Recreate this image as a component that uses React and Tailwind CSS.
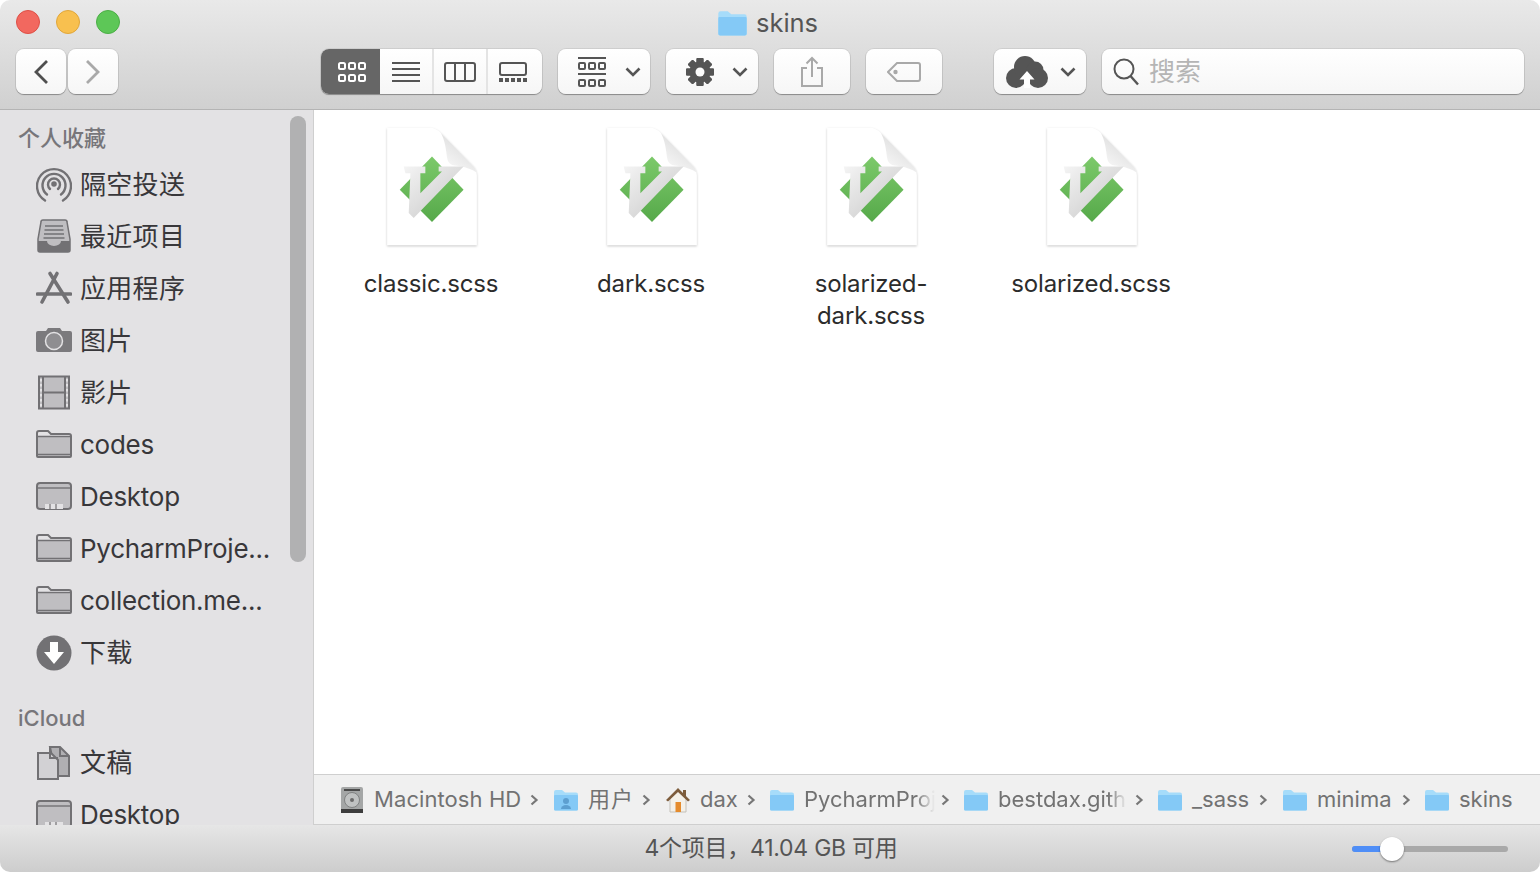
import React from "react";

const font = "font-['Inter','Noto_Sans_CJK_SC',sans-serif]";
const btn =
  "flex items-center bg-linear-to-b from-white to-[#f6f6f6] rounded-[8px] h-[45px] shadow-[0_1px_1px_rgba(0,0,0,0.3),0_0_0_1px_rgba(0,0,0,0.07)]";

const Chevron = ({ className = "" }) => (
  <svg width="16" height="10" viewBox="0 0 16 10" className={className}>
    <path d="M1.5 1.5 8 8l6.5-6.5" fill="none" stroke="#555" strokeWidth="2.6" />
  </svg>
);

const GridIcon = ({ color = "#555" }) => (
  <svg width="28" height="20" viewBox="0 0 28 20" fill="none" stroke={color} strokeWidth="2">
    {[1, 11, 21].map((x) =>
      [1, 13].map((y) => <rect key={`${x}-${y}`} x={x} y={y} width="6" height="6" rx="1.5" />)
    )}
  </svg>
);

const ListIcon = () => (
  <svg width="28" height="20" viewBox="0 0 28 20" stroke="#555" strokeWidth="2">
    {[1, 7, 13, 19].map((y) => <line key={y} x1="0" x2="28" y1={y} y2={y} />)}
  </svg>
);

const ColumnsIcon = () => (
  <svg width="32" height="20" viewBox="0 0 32 20" fill="none" stroke="#555" strokeWidth="2">
    <rect x="1" y="1" width="30" height="18" rx="2" />
    <path d="M11 1v18M21 1v18" />
  </svg>
);

const GalleryIcon = () => (
  <svg width="28" height="20" viewBox="0 0 28 20" fill="none">
    <rect x="1" y="1" width="26" height="12" rx="2" stroke="#555" strokeWidth="2" />
    {[0, 6, 12, 18, 24].map((x) => <rect key={x} x={x} y="16" width="4" height="4" fill="#555" />)}
  </svg>
);

const GroupIcon = () => (
  <svg width="28" height="30" viewBox="0 0 28 30" fill="none" stroke="#555" strokeWidth="2">
    <path d="M0 1h28M0 17h28" />
    {[1, 11, 21].map((x) =>
      [6, 23].map((y) => <rect key={`${x}-${y}`} x={x} y={y} width="6" height="6" rx="1" />)
    )}
  </svg>
);

const GearIcon = () => (
  <svg width="28" height="28" viewBox="0 0 28 28">
    <g fill="#555">
      {[0, 45, 90, 135, 180, 225, 270, 315].map((a) => (
        <rect key={a} x="10.5" y="0" width="7" height="28" rx="1" transform={`rotate(${a} 14 14)`} />
      ))}
      <circle cx="14" cy="14" r="10.5" />
    </g>
    <circle cx="14" cy="14" r="4.5" fill="#fbfbfb" />
  </svg>
);

const ShareIcon = () => (
  <svg width="24" height="32" viewBox="0 0 24 32" fill="none" stroke="#a9a9a9" strokeWidth="2">
    <path d="M7 12H2v18h20V12h-5M12 21V2M6.5 7.5 12 2l5.5 5.5" />
  </svg>
);

const TagIcon = () => (
  <svg width="34" height="20" viewBox="0 0 34 20" fill="none" stroke="#a9a9a9" strokeWidth="2">
    <path d="M10 1h21a2 2 0 0 1 2 2v14a2 2 0 0 1-2 2H10l-9-9z" />
    <circle cx="8.5" cy="10" r="1.2" fill="#a9a9a9" />
  </svg>
);

const CloudIcon = () => (
  <svg width="42" height="32" viewBox="0 0 42 32">
    <g fill="#555">
      <circle cx="10" cy="22" r="10" />
      <circle cx="19" cy="11" r="11" />
      <circle cx="29" cy="14" r="8.5" />
      <circle cx="32" cy="22" r="10" />
      <rect x="10" y="16" width="22" height="10" />
    </g>
    <path d="M21 15 13.5 23.5h4.5V32h6v-8.5h4.5z" fill="#fff" />
  </svg>
);

const SearchIcon = () => (
  <svg width="26" height="28" viewBox="0 0 26 28" fill="none" stroke="#555" strokeWidth="2">
    <circle cx="11" cy="11" r="9.5" />
    <path d="m17.5 18 7.5 8.5" strokeWidth="2.4" />
  </svg>
);

const BlueFolder = ({ w = 26, h = 22, children }) => (
  <svg width={w} height={h} viewBox="0 0 26 22" className="shrink-0">
    <path d="M1 3a2 2 0 0 1 2-2h6l3 2.5h11a2 2 0 0 1 2 2V20a1.5 1.5 0 0 1-1.5 1.5h-21A1.5 1.5 0 0 1 1 20z" fill="#a6dcfa" />
    <path d="M1 7a1 1 0 0 1 1-1h22a1 1 0 0 1 1 1v13a1.5 1.5 0 0 1-1.5 1.5h-21A1.5 1.5 0 0 1 1 20z" fill="#84c9f6" />
    {children}
  </svg>
);

const iconStroke = "#727174";
const iconFill = "#bfbec1";

const AirdropIcon = () => (
  <svg width="36" height="36" viewBox="0 0 36 36" fill="none" stroke={iconStroke} strokeWidth="2.4" strokeLinecap="round">
    <path d="M9 33.5a17 17 0 1 1 18 0" />
    <path d="M11 27.5a11.5 11.5 0 1 1 14 0" />
    <path d="M14 22a6 6 0 1 1 8 0" />
    <circle cx="18" cy="17" r="1.6" fill={iconStroke} />
  </svg>
);

const RecentsIcon = () => (
  <svg width="36" height="36" viewBox="0 0 36 36">
    <path d="M7 1h22a2 2 0 0 1 2 2l3 17v11a2 2 0 0 1-2 2H4a2 2 0 0 1-2-2V20L5 3a2 2 0 0 1 2-2z" fill={iconFill} stroke={iconStroke} strokeWidth="1.5" />
    <path d="M2 22h9a7 5 0 0 0 14 0h9v9a2 2 0 0 1-2 2H4a2 2 0 0 1-2-2z" fill={iconStroke} />
    <path d="M9 7h18M8.5 11h19M8 15h20M7.5 19h21" stroke={iconStroke} strokeWidth="1.6" />
  </svg>
);

const AppsIcon = () => (
  <svg width="36" height="36" viewBox="0 0 36 36" fill="none" stroke={iconStroke} strokeLinecap="round">
    <path d="M14 2.5 32 31M21 2.5 6 31" strokeWidth="3.6" />
    <path d="M1.5 23h33" strokeWidth="3.6" />
  </svg>
);

const CameraIcon = () => (
  <svg width="36" height="36" viewBox="0 0 36 36">
    <path d="M2 8h8l2-3h12l2 3h8a2 2 0 0 1 2 2v17a2 2 0 0 1-2 2H2a2 2 0 0 1-2-2V10a2 2 0 0 1 2-2z" fill="#7b7a7d" />
    <circle cx="18" cy="18" r="8.5" fill="#8f8e91" stroke="#e3e2e4" strokeWidth="1.5" />
  </svg>
);

const FilmIcon = () => (
  <svg width="36" height="36" viewBox="0 0 36 36">
    <rect x="3" y="1.5" width="30" height="32" fill={iconFill} stroke={iconStroke} strokeWidth="2" />
    <path d="M7 1.5v32M29 1.5v32M7 17.5h22" stroke={iconStroke} strokeWidth="2" />
    {[4, 9, 14, 19, 24, 29].map((y) => (
      <g key={y} fill="#e3e2e4">
        <rect x="4" y={y} width="2" height="2.5" />
        <rect x="30" y={y} width="2" height="2.5" />
      </g>
    ))}
  </svg>
);

const FolderIcon = () => (
  <svg width="36" height="36" viewBox="0 0 36 36">
    <path d="M1 6a2 2 0 0 1 2-2h9l3 3h18a2 2 0 0 1 2 2v20a1 1 0 0 1-1 1H2a1 1 0 0 1-1-1z" fill="#e3e2e4" stroke={iconStroke} strokeWidth="2" />
    <path d="M2 10h32v19H2z" fill={iconFill} />
    <path d="M2 9.5h32M2 27.5h32" stroke={iconStroke} strokeWidth="1.4" />
  </svg>
);

const DesktopIcon = () => (
  <svg width="36" height="36" viewBox="0 0 36 36">
    <rect x="1" y="4" width="34" height="26" rx="3" fill={iconFill} stroke={iconStroke} strokeWidth="2" />
    <path d="M2 9h32" stroke={iconStroke} strokeWidth="1.4" />
    <rect x="9" y="25" width="18" height="5" fill="#e3e2e4" />
    <path d="M14 25v5M20 25v5" stroke={iconStroke} strokeWidth="1.2" />
  </svg>
);

const DownloadIcon = () => (
  <svg width="36" height="36" viewBox="0 0 36 36">
    <circle cx="18" cy="18" r="17.5" fill={iconStroke} />
    <path d="M14 7h8v10h6L18 29 8 17h6z" fill="#fff" />
  </svg>
);

const DocsIcon = () => (
  <svg width="36" height="36" viewBox="0 0 36 36" stroke={iconStroke} strokeWidth="2">
    <path d="M14 2h10l9 9v20H20z" fill="#b0afb2" />
    <path d="M2 8h13l7 7v19H2z" fill="#d2d1d4" />
    <path d="M14 2v11h8M24 2v9h9" fill="none" />
  </svg>
);

const SidebarRow = ({ icon, label, latin }) => (
  <div className="flex items-center h-[52px] pl-[36px]">
    <span className="w-[36px] h-[36px] shrink-0">{icon}</span>
    <span className={latin ? "ml-[8px] text-[26px] tracking-[-0.27px] leading-[36px] text-[#38373a] whitespace-nowrap" : "ml-[8px] text-[26px] tracking-[0.3px] leading-[36px] text-[#38373a] whitespace-nowrap"}>
      {label}
    </span>
  </div>
);

const favourites = [
  { icon: <AirdropIcon />, label: "隔空投送" },
  { icon: <RecentsIcon />, label: "最近项目" },
  { icon: <AppsIcon />, label: "应用程序" },
  { icon: <CameraIcon />, label: "图片" },
  { icon: <FilmIcon />, label: "影片" },
  { icon: <FolderIcon />, label: "codes", latin: true },
  { icon: <DesktopIcon />, label: "Desktop", latin: true },
  { icon: <FolderIcon />, label: "PycharmProje...", latin: true },
  { icon: <FolderIcon />, label: "collection.me...", latin: true },
  { icon: <DownloadIcon />, label: "下载" },
];

const ScssIcon = () => (
  <svg width="100" height="123" viewBox="35 30 300 370" className="ml-[2px] drop-shadow-[0_1px_1px_rgba(0,0,0,0.22)]">
    <defs>
      <linearGradient id="curl" x1="0.2" y1="1" x2="0.7" y2="0.2">
        <stop offset="0" stopColor="#fafafa" />
        <stop offset="1" stopColor="#dcdcdc" />
      </linearGradient>
      <linearGradient id="green" x1="0" y1="0" x2="0" y2="1">
        <stop offset="0" stopColor="#7cc96a" />
        <stop offset="1" stopColor="#56a94a" />
      </linearGradient>
      <linearGradient id="vee" x1="0" y1="0" x2="1" y2="1">
        <stop offset="0" stopColor="#f4f4f4" />
        <stop offset="1" stopColor="#c6c6c6" />
      </linearGradient>
    </defs>
    <path d="M50 38h128c14 0 24 6 34 16l92 94c10 10 16 20 16 34v210H50z" fill="#fff" />
    <path d="M212 54l92 94c10 10 14 18 14 24-22-14-48-18-64-20-14-2-22-10-24-26-2-18-6-50-18-72z" fill="url(#curl)" />
    <path d="M185 125 280 225 185 322 88 225z" fill="url(#green)" />
    <path d="M100 155h65v20h-15v60l65-65h-10v-15h75L130 310l-15-15 5-120h-15z" fill="url(#vee)" />
  </svg>
);

const FileItem = ({ name }) => (
  <div className="flex flex-col items-center">
    <ScssIcon />
    <div className="mt-[20px] w-[170px] text-center text-[24px] tracking-[-0.17px] leading-[32px] text-[#2c2c2c]">{name}</div>
  </div>
);

const PathSep = ({ className }) => (
  <svg width="9" height="12" viewBox="0 0 9 12" className={`shrink-0 ${className}`}>
    <path d="M1.5 1.5 6.5 6l-5 4.5" fill="none" stroke="#777" strokeWidth="2.2" />
  </svg>
);

const PathLabel = ({ children, className = "" }) => (
  <span className={`ml-[9px] whitespace-nowrap text-[22px] text-[#727272] ${className}`}>{children}</span>
);

const fadeLabel = "overflow-hidden [mask-image:linear-gradient(to_right,black_85%,transparent)]";

const DiskIcon = () => (
  <svg width="24" height="28" viewBox="0 0 24 28" className="shrink-0">
    <rect x="1" y="1" width="22" height="26" rx="2" fill="#a4a6a6" />
    <rect x="1" y="23" width="22" height="4" fill="#3d3d3d" />
    <rect x="4" y="3" width="16" height="2" fill="#4a4a4a" />
    <circle cx="12" cy="14" r="7.5" fill="#c0c2c2" stroke="#808282" />
    <circle cx="12" cy="14" r="2" fill="#6b6b6b" />
  </svg>
);

const HomeIcon = () => (
  <svg width="24" height="26" viewBox="0 0 24 26" className="shrink-0">
    <path d="M4 12v13h16V12L12 4z" fill="#f4f0e8" stroke="#c4c0b8" />
    <rect x="17" y="3" width="3" height="6" fill="#7d5c3c" />
    <path d="M0 13 12 1l12 12-2 1.500L12 5 2 14.500z" fill="#7d5c3c" />
    <rect x="9.500" y="15" width="5.500" height="10" fill="#e58b2c" />
  </svg>
);

export default function App() {
  return (
    <div className={`${font} w-[1540px] h-[872px] flex flex-col overflow-hidden rounded-[10px] bg-white`}>
      {/* title bar + toolbar */}
      <header className="h-[110px] shrink-0 bg-linear-to-b from-[#e9e9e9] to-[#d0d0d0] border-b border-[#b4b4b4]">
        <div className="h-[49px] grid grid-cols-[1fr_auto_1fr] pt-[10px]">
          <div className="flex gap-[16px] pl-[16px]">
            <span className="w-[24px] h-[24px] rounded-full bg-[#f2685f] border border-[#de4f46]" />
            <span className="w-[24px] h-[24px] rounded-full bg-[#f8c04f] border border-[#e0a63a]" />
            <span className="w-[24px] h-[24px] rounded-full bg-[#5dc757] border border-[#4bae46]" />
          </div>
          <div className="flex items-center gap-[8px] h-[26px] mr-[5px]">
            <BlueFolder w={31} h={26} />
            <span className="text-[25.5px] leading-[26px] text-[#555]">skins</span>
          </div>
          <div />
        </div>
        <div className="flex items-start pl-[16px] h-[46px]">
          <div className={`${btn} w-[50px] justify-center`}>
            <svg width="16" height="26" viewBox="0 0 16 26"><path d="M14 2 3 13l11 11" fill="none" stroke="#4f4f4f" strokeWidth="2.8" /></svg>
          </div>
          <div className={`${btn} w-[50px] justify-center ml-[2px]`}>
            <svg width="16" height="26" viewBox="0 0 16 26"><path d="m2 2 11 11L2 24" fill="none" stroke="#a9a9a9" strokeWidth="2.8" /></svg>
          </div>
          <div className={`${btn} ml-[203px] w-[221px] overflow-hidden`}>
            <div className="w-[59px] h-full flex items-center justify-center pl-[2px] bg-[#666]"><GridIcon color="#fff" /></div>
            <div className="w-[54px] h-full flex items-center justify-center border-r-2 border-[#e4e4e4]"><ListIcon /></div>
            <div className="w-[54px] h-full flex items-center justify-center border-r-2 border-[#e4e4e4]"><ColumnsIcon /></div>
            <div className="w-[54px] h-full flex items-center justify-center pr-[5px]"><GalleryIcon /></div>
          </div>
          <div className={`${btn} ml-[16px] w-[92px] pl-[20px]`}>
            <GroupIcon />
            <Chevron className="ml-[19px]" />
          </div>
          <div className={`${btn} ml-[16px] w-[92px] pl-[20px]`}>
            <GearIcon />
            <Chevron className="ml-[18px]" />
          </div>
          <div className={`${btn} ml-[16px] w-[76px] justify-center`}><ShareIcon /></div>
          <div className={`${btn} ml-[16px] w-[76px] justify-center`}><TagIcon /></div>
          <div className={`${btn} ml-[52px] w-[92px] pl-[12px]`}>
            <CloudIcon />
            <Chevron className="ml-[12px]" />
          </div>
          <div className={`${btn} ml-[16px] w-[422px] pl-[11px]`}>
            <SearchIcon />
            <span className="ml-[10px] text-[26px] text-[#b5b5b5]">搜索</span>
          </div>
        </div>
      </header>

      <div className="flex flex-1 min-h-0">
        {/* sidebar */}
        <aside className="relative w-[314px] shrink-0 bg-[#e3e2e4] border-r border-[#cfcfcf] overflow-hidden">
          <div className="pl-[18px] pt-[14px] h-[42px] text-[22px] leading-[28px] font-medium text-[#77767a]">个人收藏</div>
          <div className="mt-[7px]">
            {favourites.map((f) => <SidebarRow key={f.label} {...f} />)}
          </div>
          <div className="pl-[18px] mt-[25px] text-[22px] leading-[28px] font-medium text-[#77767a]">iCloud</div>
          <div className="mt-[5px]">
            <SidebarRow icon={<DocsIcon />} label="文稿" />
            <SidebarRow icon={<DesktopIcon />} label="Desktop" latin />
          </div>
          <div className="absolute left-[290px] top-[6px] w-[16px] h-[446px] rounded-full bg-[#b1b1b2]" />
        </aside>

        {/* files + path bar */}
        <main className="flex-1 min-w-0 flex flex-col bg-white">
          <div className="flex-1 min-h-0 pl-[7px] pt-[15px] grid grid-cols-[repeat(4,220px)] content-start">
            {["classic.scss", "dark.scss", "solarized-dark.scss", "solarized.scss"].map((n) => (
              <FileItem key={n} name={n} />
            ))}
          </div>
          <div className="h-[51px] shrink-0 flex items-center pl-[26px] bg-[#f0f0f0] border-t border-b border-[#cfcfcf]">
            <DiskIcon />
            <PathLabel className="w-[147px] ml-[10px] tracking-[0.08px]">Macintosh HD</PathLabel>
            <PathSep className="ml-[9px] mr-[14px]" />
            <BlueFolder>
              <circle cx="13" cy="12" r="3" fill="#5d9fd0" />
              <path d="M8 20a5 4 0 0 1 10 0z" fill="#5d9fd0" />
            </BlueFolder>
            <PathLabel className="w-[43px] tracking-[1px]">用户</PathLabel>
            <PathSep className="ml-[11px] mr-[15px]" />
            <HomeIcon />
            <PathLabel className="w-[37px] ml-[10px]">dax</PathLabel>
            <PathSep className="ml-[10px] mr-[13px]" />
            <BlueFolder />
            <PathLabel className={`w-[131px] ${fadeLabel}`}>PycharmProjects</PathLabel>
            <PathSep className="ml-[6px] mr-[13px]" />
            <BlueFolder />
            <PathLabel className={`w-[129px] ${fadeLabel}`}>bestdax.github.io</PathLabel>
            <PathSep className="ml-[8px] mr-[13px]" />
            <BlueFolder />
            <PathLabel className="w-[57px] ml-[8px]">_sass</PathLabel>
            <PathSep className="ml-[10px] mr-[14px]" />
            <BlueFolder />
            <PathLabel className="w-[75px]">minima</PathLabel>
            <PathSep className="ml-[10px] mr-[13px]" />
            <BlueFolder />
            <PathLabel>skins</PathLabel>
          </div>
        </main>
      </div>

      {/* status bar */}
      <footer className="h-[47px] shrink-0 grid grid-cols-[1fr_auto_1fr] items-center bg-linear-to-b from-[#e6e6e6] to-[#cdcdcd]">
        <div />
        <div className="ml-[2px] text-[23px] tracking-[-0.25px] text-[#555] whitespace-nowrap">4个项目，41.04 GB 可用</div>
        <div className="flex justify-end pr-[32px]">
          <div className="relative w-[156px] h-[6px] rounded-full bg-[#a9a9a9]">
            <div className="h-full w-[40px] rounded-l-full bg-[#4f8ef7]" />
            <div className="absolute left-[28px] top-[-9px] w-[24px] h-[24px] rounded-full bg-white shadow-[0_1px_2px_rgba(0,0,0,0.45)]" />
          </div>
        </div>
      </footer>
    </div>
  );
}
